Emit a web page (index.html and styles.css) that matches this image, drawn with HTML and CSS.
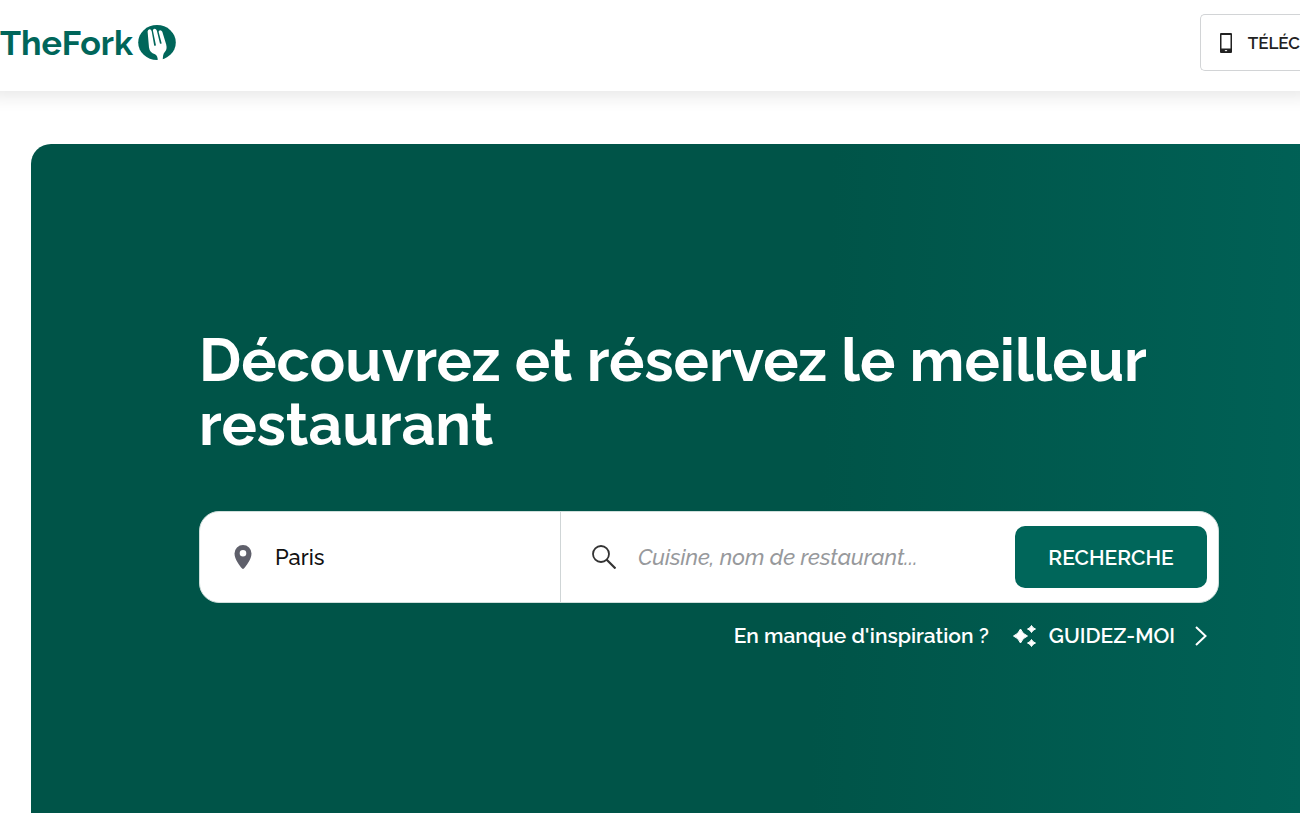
FILE: index.html
```html
<!DOCTYPE html>
<html lang="fr">
<head>
    <meta charset="utf-8">
    <title>TheFork</title>
    <link rel="stylesheet" href="styles.css">
</head>
<body>
    <header class="header">
        <a class="logo" href="#">
            <span>TheFork</span>
            <svg width="38" height="36" viewBox="0 0 38 36">
                <ellipse cx="19" cy="17.5" rx="18.800" ry="17.500" fill="#00665a"/>
                <path fill="#fff" d="M9.600 6.500Q9.800 4.500 11.600 4.300Q13.200 4.300 13.700 6.200L16.200 20.800L18 20.500L14.900 5.600Q15 4 16.600 3.800Q18.200 3.800 18.800 5.400L22 18.800L23.700 18.500L20.600 6.800Q20.800 5.400 22.200 5.200Q23.600 5.200 24.300 6.800L28.200 19.500Q29.400 24.500 26.800 27Q24.600 29 24.800 36L19.700 36Q20 31 17 29.200Q11.600 27.500 11 22.500z"/>
            </svg>
        </a>
        <a class="app-link" href="#">
            <svg width="12" height="20" viewBox="0 0 12 20">
                <path fill="#222" fill-rule="evenodd" d="M1 0h10q1 0 1 1v18q0 1-1 1H1q-1 0-1-1V1q0-1 1-1zM1.500 2v13.500h9V2zM4.500 17l1.500 1.500L7.500 17z"/>
            </svg>
            <span>TÉLÉC</span>
        </a>
    </header>

    <main class="hero">
        <h1>Découvrez et réservez le meilleur restaurant</h1>
        <form class="search">
            <label class="field field-city">
                <svg width="24" height="24" viewBox="0 0 24 24">
                    <path fill="#5f606b" fill-rule="evenodd" d="M12 0a8.500 8.500 0 0 0-8.500 8.500C3.500 14.500 9 21 11.100 23.500q.9.9 1.800 0C15 21 20.500 14.500 20.500 8.500A8.500 8.500 0 0 0 12 0zM12 5a3.300 3.300 0 1 1 0 6.600a3.300 3.300 0 1 1 0-6.600z"/>
                </svg>
                <input type="text" value="Paris" aria-label="Ville">
            </label>
            <label class="field field-query">
                <svg width="24" height="24" viewBox="0 0 24 24" fill="none" stroke="#333" stroke-width="1.8">
                    <circle cx="9" cy="9" r="8"/>
                    <path d="M14.500 14.500L23.500 23.500" stroke-width="2.200"/>
                </svg>
                <input type="text" placeholder="Cuisine, nom de restaurant..." aria-label="Cuisine, nom de restaurant">
            </label>
            <button class="search-btn" type="submit">RECHERCHE</button>
        </form>
        <div class="inspiration">
            <span>En manque d'inspiration ?</span>
            <a class="guide" href="#">
                <svg width="24" height="24" viewBox="0 0 24 24" fill="#fff" stroke="#fff" stroke-linejoin="round">
                    <path d="M7.500 5Q9.500 10 14.500 12Q9.500 14 7.500 19Q5.500 14 .5 12Q5.500 10 7.500 5z"/>
                    <path d="M18.500 1.500Q19.500 4 22.500 5Q19.500 6 18.500 8.500Q17.500 6 14.500 5Q17.500 4 18.500 1.500z"/>
                    <path d="M18.500 15.500Q19.500 18 22.500 19Q19.500 20 18.500 22.500Q17.500 20 14.500 19Q17.500 18 18.500 15.500z"/>
                </svg>
                <span>GUIDEZ-MOI</span>
                <svg class="chevron" width="12" height="20" viewBox="0 0 12 20" fill="none" stroke="#fff" stroke-width="2">
                    <path d="M1 1L10.500 10L1 19"/>
                </svg>
            </a>
        </div>
    </main>
</body>
</html>
```

FILE: styles.css
```css
* {
    box-sizing: border-box;
}
body {
    margin: 0;
    min-height: 100vh;
    display: flex;
    flex-direction: column;
    font-family: Raleway, Lato, sans-serif;
    font-size: 22px;
    font-weight: 500;
    background: #fff;
}
a {
    text-decoration: none;
    color: inherit;
}
svg {
    flex-shrink: 0;
}
.header {
    display: flex;
    justify-content: space-between;
    align-items: center;
    padding: 14px 0 20px;
    background: #fff;
    box-shadow: 0 -6px 16px 12px rgba(0, 0, 0, 0.09);
}
.logo {
    display: flex;
    align-items: center;
    gap: 5px;
    color: #00665a;
    font-size: 34px;
    font-weight: bold;
    line-height: 36px;
}
.app-link {
    display: flex;
    align-items: center;
    gap: 16px;
    height: 57px;
    padding-left: 19px;
    border: 1px solid #d2d4d6;
    border-right: none;
    border-radius: 5px 0 0 5px;
    color: #222;
    font-size: 17px;
    font-weight: 600;
    white-space: nowrap;
}
.hero {
    flex: 1;
    margin: 53px 0 0 31px;
    padding: 185px 81px 100px 168px;
    border-radius: 20px 0 0 0;
    color: #fff;
    background: linear-gradient(92deg, #005448 62%, #006156 100%);
}
h1 {
    margin: 0;
    font-size: 59px;
    line-height: 64px;
    font-weight: bold;
}
.search {
    display: flex;
    align-items: center;
    height: 92px;
    margin-top: 54px;
    padding-right: 11px;
    border: 1px solid #cfdedb;
    border-radius: 20px;
    background: #fff;
}
.field {
    display: flex;
    align-items: center;
    height: 100%;
    min-width: 0;
}
.field input {
    flex: 1;
    min-width: 0;
    padding: 0;
    border: none;
    outline: none;
    background: none;
    font: inherit;
    color: #111;
}
.field input::placeholder {
    color: #97999c;
    font-style: italic;
    opacity: 1;
}
.field-city {
    flex: 0 0 361px;
    gap: 20px;
    padding-left: 31px;
    border-right: 1px solid #cfd5d6;
}
.field-query {
    flex: 1;
    gap: 22px;
    padding-left: 31px;
}
.search-btn {
    width: 192px;
    height: 62px;
    border: none;
    border-radius: 10px;
    background: #00665a;
    color: #fff;
    font: inherit;
    font-size: 21px;
    font-weight: 600;
}
.inspiration {
    display: flex;
    justify-content: flex-end;
    align-items: center;
    gap: 24px;
    margin-top: 19px;
    padding-right: 12px;
    font-size: 21px;
    font-weight: 600;
    line-height: 28px;
}
.guide {
    display: flex;
    align-items: center;
    gap: 12px;
}
.chevron {
    margin-left: 8px;
}
```
